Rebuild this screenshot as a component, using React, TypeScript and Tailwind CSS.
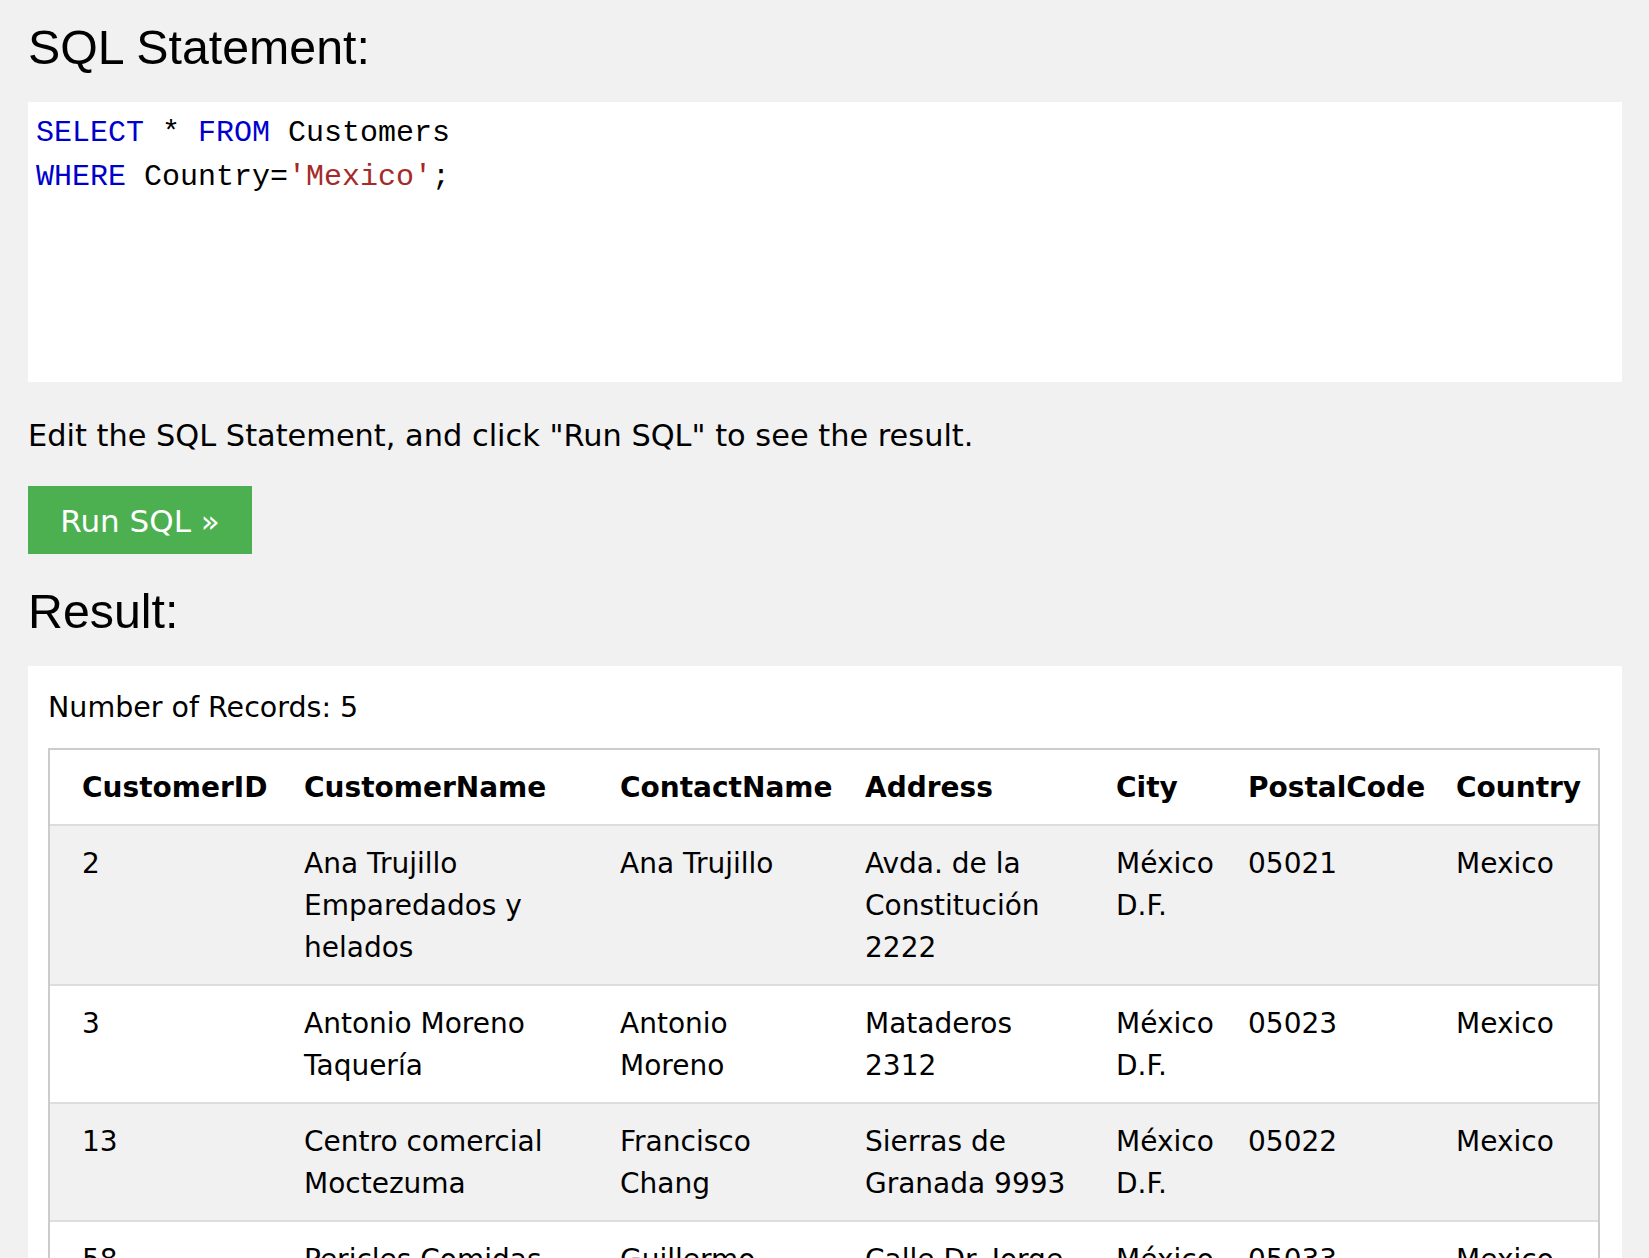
import React from 'react';

const rows = [
  ['2', 'Ana Trujillo Emparedados y helados', 'Ana Trujillo', 'Avda. de la Constitución 2222', 'México D.F.', '05021', 'Mexico'],
  ['3', 'Antonio Moreno Taquería', 'Antonio Moreno', 'Mataderos 2312', 'México D.F.', '05023', 'Mexico'],
  ['13', 'Centro comercial Moctezuma', 'Francisco Chang', 'Sierras de Granada 9993', 'México D.F.', '05022', 'Mexico'],
  ['58', 'Pericles Comidas clásicas', 'Guillermo Fernández', 'Calle Dr. Jorge Cash 321', 'México D.F.', '05033', 'Mexico'],
  ['80', 'Tortuga Restaurante', 'Miguel Angel Paolino', 'Avda. Azteca 123', 'México D.F.', '05033', 'Mexico'],
];

const headers = ['CustomerID', 'CustomerName', 'ContactName', 'Address', 'City', 'PostalCode', 'Country'];
const widths = ['w-[238px]', 'w-[316px]', 'w-[245px]', 'w-[251px]', 'w-[132px]', 'w-[208px]', 'w-[158px]'];

export default function App() {
  return (
    <div className="min-h-screen bg-[#f1f1f1] pl-[28px] pr-[27px] pt-[19px] pb-10 text-black">
      <h2 className="font-['Liberation_Sans',Arial,sans-serif] text-[48.3px] leading-[56px] font-normal">
        SQL Statement:
      </h2>

      {/* editor */}
      <div className="mt-[27px] h-[280px] bg-white pl-[8px] pt-[9px] font-['Liberation_Mono','Courier_New',monospace] text-[30px] leading-[44px]">
        <div>
          <span className="text-[#0000cd]">SELECT</span> * <span className="text-[#0000cd]">FROM</span> Customers
        </div>
        <div>
          <span className="text-[#0000cd]">WHERE</span> Country=<span className="text-[#a52a2a]">'Mexico'</span>;
        </div>
      </div>

      <p className="mt-[31px] font-['DejaVu_Sans',Verdana,sans-serif] text-[30.4px] leading-[45px]">
        Edit the SQL Statement, and click "Run SQL" to see the result.
      </p>

      <button className="mt-[28px] flex h-[68px] w-[224px] items-center justify-center bg-[#4caf50] pt-[3px] font-['DejaVu_Sans',Verdana,sans-serif] text-[31px] text-white">
        Run SQL »
      </button>

      <h2 className="mt-[29px] font-['Liberation_Sans',Arial,sans-serif] text-[48.3px] leading-[56px] font-normal">
        Result:
      </h2>

      {/* result panel */}
      <div className="mt-[27px] bg-white pl-[20px] pr-[22px] pt-[21px] pb-[20px] font-['DejaVu_Sans',Verdana,sans-serif] text-[28px] leading-[42px]">
        <div className="text-[28.5px]">Number of Records: 5</div>
        <table className="mt-[19px] w-full table-fixed border-separate border-spacing-0 border-2 border-[#ccc]">
          <thead>
            <tr className="bg-white">
              {headers.map((h, i) => (
                <th
                  key={h}
                  className={`${widths[i]} border-b-2 border-[#ddd] pt-[17px] pb-[15px] pr-4 text-left align-top font-bold ${i === 0 ? 'pl-8' : 'pl-4'}`}
                >
                  {h}
                </th>
              ))}
            </tr>
          </thead>
          <tbody>
            {rows.map((r, ri) => (
              <tr key={r[0]} className={ri % 2 === 0 ? 'bg-[#f1f1f1]' : 'bg-white'}>
                {r.map((c, ci) => (
                  <td
                    key={ci}
                    className={`pt-[17px] pb-[15px] pr-4 align-top ${ci === 0 ? 'pl-8' : 'pl-4'} ${ri < rows.length - 1 ? 'border-b-2 border-[#ddd]' : ''}`}
                  >
                    {c}
                  </td>
                ))}
              </tr>
            ))}
          </tbody>
        </table>
      </div>
    </div>
  );
}
